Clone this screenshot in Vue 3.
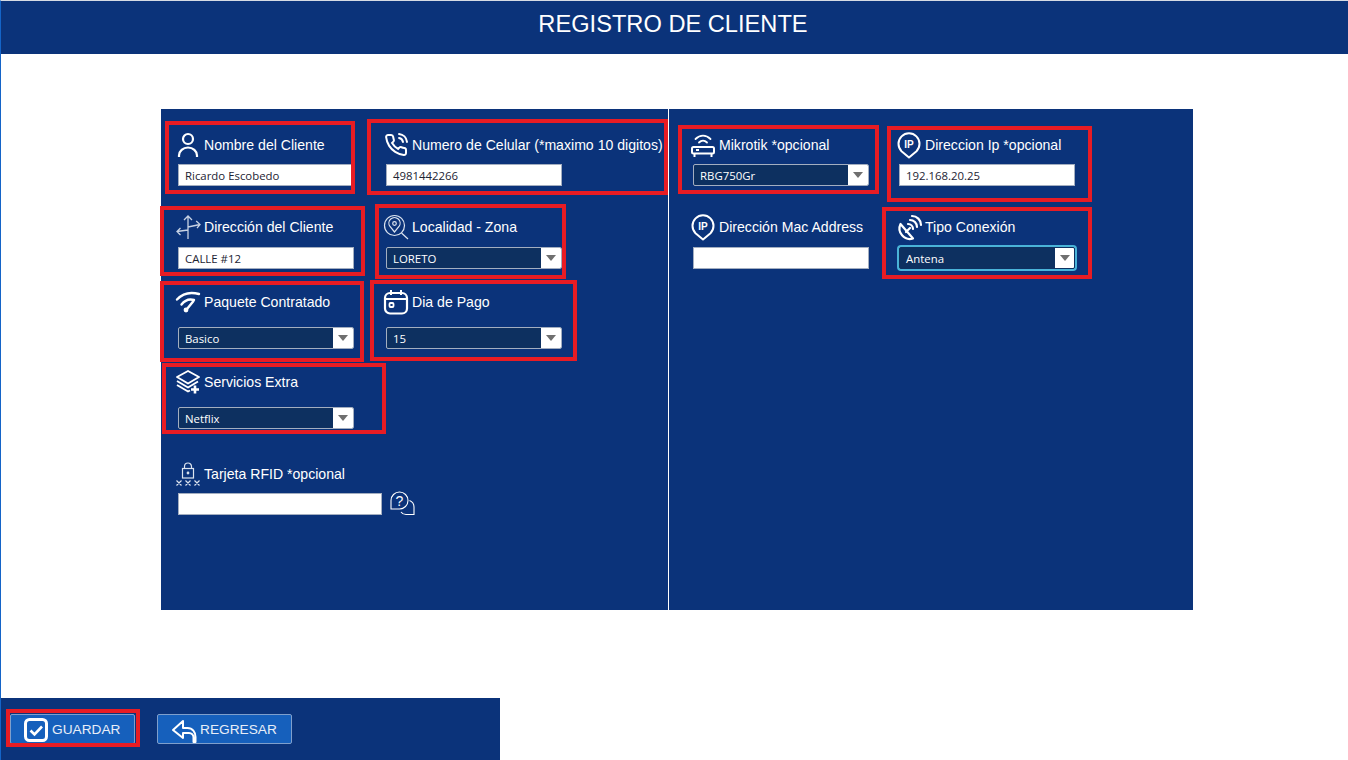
<script setup>
const icons = {
  person: '<circle cx="12" cy="6" r="5" stroke-width="2.200"/><path d="M3 24v-1.500a9 8 0 0 1 18 0V24" stroke-width="2.200"/>',
  phone: '<path stroke-width="2" stroke-linecap="round" d="M15.05 5A5 5 0 0 1 19 8.95M15.05 1A9 9 0 0 1 23 8.94m-1 7.98v3a2 2 0 0 1-2.180 2 19.790 19.790 0 0 1-8.630-3.070 19.500 19.500 0 0 1-6-6 19.790 19.790 0 0 1-3.070-8.670A2 2 0 0 1 4.110 2h3a2 2 0 0 1 2 1.720 12.840 12.840 0 0 0 .7 2.810 2 2 0 0 1-.45 2.110L8.090 9.910a16 16 0 0 0 6 6l1.270-1.270a2 2 0 0 1 2.110-.45 12.840 12.840 0 0 0 2.810.7A2 2 0 0 1 22 16.920z"/>',
  arrows: '<g stroke="#c7d2e4" stroke-width="1.300"><path d="M12 1v23M8 5l4-4 4 4M12 15 1 16.500M4.500 13 1 16.500l3.500 3.500M12 12l12-2.500M20.200 6 24 9.500l-3 3.600"/></g>',
  search: '<g stroke="#dbe3ef" stroke-width="1.200"><circle cx="10.500" cy="10.500" r="10"/><path d="M10.500 17 6 11.500a5.600 5.600 0 1 1 9 0zM17.500 18l6.500 6"/><circle cx="10.500" cy="8.500" r="1.800"/></g>',
  wifi: '<path stroke-width="2.400" stroke-linecap="round" d="M1 9.500C7 3 14 1.500 23 4M5.500 14.500C9 10 13 8.500 18 10M11 19l6.500-8"/><circle cx="10" cy="20" r="2.400" fill="#fff" stroke="none"/>',
  calendar: '<rect x="1" y="3" width="22" height="20.500" rx="5" stroke-width="2.200"/><path stroke-width="2" d="M1 9h22M7 0v5M17 0v5"/><rect x="5.500" y="13" width="4" height="4" rx="1" stroke-width="1.800"/>',
  layers: '<g stroke-width="1.900" stroke-linejoin="round"><path d="M12 1 23 7 12 13.500 1 7z"/><path d="M1 11l11 6.500 10-6M1 15l11 6.500 2-1"/></g><path stroke-width="2.600" d="M19 15.500v8M15 19.500h8"/>',
  lock: '<g stroke="#dbe3ef" stroke-width="1.200"><rect x="6.500" y="6.500" width="11" height="9.500"/><path d="M8.500 6.500V4.500a3.500 3.500 0 0 1 7 0v2"/><circle cx="12" cy="11" r=".8" fill="#fff"/><path d="M.5 18.500l5 5M5.500 18.500l-5 5M9.500 18.500l5 5M14.500 18.500l-5 5M18.500 18.500l5 5M23.500 18.500l-5 5"/></g>',
  router: '<path stroke-width="1.800" stroke-linecap="round" d="M4.500 6C9 1.500 15 1.500 19.500 6M8 9.500c2.500-2.500 5.500-2.500 8 0"/><rect x="1" y="14" width="22" height="6.500" rx="1.500" stroke-width="2"/><path stroke-width="2" d="M3.500 21v3M20.500 21v3M5 17h3"/>',
  ip: '<path stroke-width="2" stroke-linejoin="round" d="M12 24.500 4.500 18.200a10.500 10.500 0 1 1 15 0z"/><text x="12" y="14.500" text-anchor="middle" fill="#fff" stroke="none" font-family="Liberation Sans, sans-serif" font-weight="700" font-size="10">IP</text>',
  satellite: '<path stroke-width="2.200" stroke-linejoin="round" d="M3.500 9a10.500 10.500 0 0 0 12.500 14.500z"/><path stroke-width="2.200" stroke-linecap="round" d="M9 17l4-4M11 9a5 5 0 0 1 5 5M13 5a7 7 0 0 1 7 7M15 1a9 9 0 0 1 9 9"/>',
  help: '<path stroke-width="1.100" d="M1 18V9.500a8.500 8.500 0 1 1 8.500 8.500zM19.500 9.500c2.500 1 4.500 3.500 4.500 6.500v7.500H16c-2 0-4-1-5-2.500"/><text x="9.500" y="14.500" text-anchor="middle" fill="#fff" stroke="none" font-family="Liberation Sans, sans-serif" font-size="14">?</text>',
  check: '<rect x="1.500" y="1.500" width="21" height="21" rx="4" stroke-width="3"/><path stroke-width="2.600" d="M6.500 12.500l4 4 7.500-8"/>',
  back: '<path stroke-width="2" stroke-linejoin="round" d="M11 3 1 12l10 8v-5h6c2.500 0 4.500 2 4.500 4.500V24h2v-5c0-5-3-9-8-9H11z"/>'
}

const leftFields = [
  { icon: 'person', label: 'Nombre del Cliente', value: 'Ricardo Escobedo', gap: 'near' },
  { icon: 'phone', label: 'Numero de Celular (*maximo 10 digitos)', value: '4981442266', gap: 'near' },
  { icon: 'arrows', label: 'Dirección del Cliente', value: 'CALLE #12', gap: 'mid' },
  { icon: 'search', label: 'Localidad - Zona', value: 'LORETO', combo: true, gap: 'mid' },
  { icon: 'wifi', label: 'Paquete Contratado', value: 'Basico', combo: true, gap: 'far' },
  { icon: 'calendar', label: 'Dia de Pago', value: '15', combo: true, gap: 'far' },
  { icon: 'layers', label: 'Servicios Extra', value: 'Netflix', combo: true, gap: 'far' }
]

const rightFields = [
  { icon: 'router', label: 'Mikrotik *opcional', value: 'RBG750Gr', combo: true, gap: 'near' },
  { icon: 'ip', label: 'Direccion Ip *opcional', value: '192.168.20.25', gap: 'near' },
  { icon: 'ip', label: 'Dirección Mac Address', value: '', gap: 'mid' },
  { icon: 'satellite', label: 'Tipo Conexión', value: 'Antena', combo: true, focus: true, gap: 'mid' }
]

const marks = [
  [165, 121, 190, 73], [367, 119, 301, 76], [160, 206, 205, 70], [375, 204, 191, 75],
  [160, 281, 204, 81], [370, 280, 207, 81], [162, 363, 224, 71], [678, 125, 201, 69],
  [887, 126, 205, 76], [882, 207, 210, 72], [6, 709, 134, 38]
]

const markStyle = (m) => ({ left: m[0] + 'px', top: m[1] + 'px', width: m[2] + 'px', height: m[3] + 'px' })
</script>

<template>
  <div class="window">
    <header class="title">REGISTRO DE CLIENTE</header>

    <main class="main">
      <section class="panel">
        <div class="col col-left">
          <div v-for="f in leftFields" :key="f.label" class="field" :class="f.gap">
            <div class="label">
              <svg class="icon" viewBox="0 0 24 24" v-html="icons[f.icon]"></svg>
              <span>{{ f.label }}</span>
            </div>
            <div v-if="f.combo" class="combo">
              <span class="combo-text">{{ f.value }}</span>
              <span class="combo-btn"><i class="tri"></i></span>
            </div>
            <div v-else class="input">{{ f.value }}</div>
          </div>
          <div class="field near rfid">
            <div class="label">
              <svg class="icon" viewBox="0 0 24 24" v-html="icons.lock"></svg>
              <span>Tarjeta RFID *opcional</span>
            </div>
            <div class="rfid-row">
              <div class="input rfid-input"></div>
              <svg class="icon" viewBox="0 0 24 24" v-html="icons.help"></svg>
            </div>
          </div>
        </div>

        <div class="col col-right">
          <div v-for="f in rightFields" :key="f.label" class="field" :class="f.gap">
            <div class="label">
              <svg class="icon" viewBox="0 0 24 24" v-html="icons[f.icon]"></svg>
              <span>{{ f.label }}</span>
            </div>
            <div v-if="f.combo" class="combo" :class="{ focus: f.focus }">
              <span class="combo-text">{{ f.value }}</span>
              <span class="combo-btn"><i class="tri"></i></span>
            </div>
            <div v-else class="input">{{ f.value }}</div>
          </div>
        </div>
      </section>
    </main>

    <footer class="footer">
      <button class="btn btn-save">
        <svg class="icon" viewBox="0 0 24 24" v-html="icons.check"></svg>
        <span>GUARDAR</span>
      </button>
      <button class="btn btn-back">
        <svg class="icon" viewBox="0 0 24 24" v-html="icons.back"></svg>
        <span>REGRESAR</span>
      </button>
    </footer>

    <div v-for="(m, i) in marks" :key="i" class="mark" :style="markStyle(m)"></div>
  </div>
</template>

<style>
html, body { margin: 0; background: #fff; overflow: hidden; }
</style>

<style scoped>
.window {
  position: relative;
  box-sizing: border-box;
  width: 1348px;
  height: 760px;
  display: flex;
  flex-direction: column;
  background: #fff;
  border-left: 1px solid #1464c8;
  border-top: 1px solid #d6dbe4;
  font-family: "Liberation Sans", Arial, sans-serif;
  color: #fff;
}
.title {
  box-sizing: border-box;
  height: 53px;
  flex: none;
  background: #0b337a;
  text-align: center;
  font-size: 23.650px;
  line-height: 46px;
  padding-right: 3px;
}
.main { flex: 1; padding: 55px 155px 0 160px; }
.panel {
  height: 501px;
  display: flex;
  background: #0b337a;
}
.col { display: grid; align-content: start; align-items: end; }
.col-left {
  box-sizing: border-box;
  width: 507px;
  padding-left: 17px;
  grid-template-columns: 176px 176px;
  column-gap: 32px;
  grid-template-rows: 77px 83px 80px 80px 86px;
}
.col-right {
  flex: 1;
  border-left: 1px solid #fff;
  padding-left: 24px;
  grid-template-columns: 176px 176px;
  column-gap: 30px;
  grid-template-rows: 77px 83px;
}
.field { display: flex; flex-direction: column; min-width: 0; }
.near .label { margin-bottom: 7px; }
.mid .label { margin-bottom: 8px; }
.far .label { margin-bottom: 13px; }
.label {
  height: 24px;
  margin-left: -2px;
  display: flex;
  align-items: center;
  gap: 4px;
  font-size: 14.100px;
  white-space: nowrap;
}
.icon {
  width: 24px;
  height: 24px;
  flex: none;
  fill: none;
  stroke: #fff;
  overflow: visible;
}
.input, .combo {
  box-sizing: border-box;
  height: 22px;
  font-family: "Open Sans", "Noto Sans", sans-serif;
  font-size: 11.400px;
  line-height: 21px;
}
.input {
  background: #fff;
  border: 1px solid #a3aec0;
  padding-left: 6px;
  color: #1c2333;
}
.combo {
  display: flex;
  background: #0d3060;
  border: 1px solid #a3aec0;
  border-radius: 2px;
  color: #fff;
  overflow: hidden;
}
.combo-text { flex: 1; padding-left: 6px; }
.combo-btn {
  width: 20px;
  background: #fff;
  display: flex;
  align-items: center;
  justify-content: center;
}
.tri {
  width: 0;
  height: 0;
  border-left: 5px solid transparent;
  border-right: 5px solid transparent;
  border-top: 6px solid #6f6f6f;
}
.focus {
  border-color: #0d3060;
  box-shadow: 0 0 0 2px #4ab3d8;
}
.focus .combo-btn { margin: -1px -1px -1px 0; }
.rfid { grid-column: 1 / span 2; }
.rfid-row { display: flex; align-items: flex-end; gap: 8px; height: 22px; }
.rfid-input { width: 204px; }
.footer {
  flex: none;
  width: 499px;
  height: 62px;
  box-sizing: border-box;
  background: #0b337a;
  display: flex;
  align-items: flex-start;
  gap: 22px;
  padding: 16px 0 0 9px;
}
.btn {
  box-sizing: border-box;
  height: 30px;
  width: 125px;
  display: flex;
  align-items: center;
  gap: 4px;
  padding: 1px 0 0 13px;
  background: #1660bc;
  border: 1px solid #7f9fcc;
  border-radius: 2px;
  color: #e8eef8;
  font-family: "Liberation Sans", Arial, sans-serif;
  font-size: 13.700px;
}
.btn-back { width: 135px; padding-left: 14px; }
.mark {
  position: absolute;
  box-sizing: border-box;
  border: 4px solid #e81c24;
  margin: -1px 0 0 -1px;
  pointer-events: none;
}
</style>
